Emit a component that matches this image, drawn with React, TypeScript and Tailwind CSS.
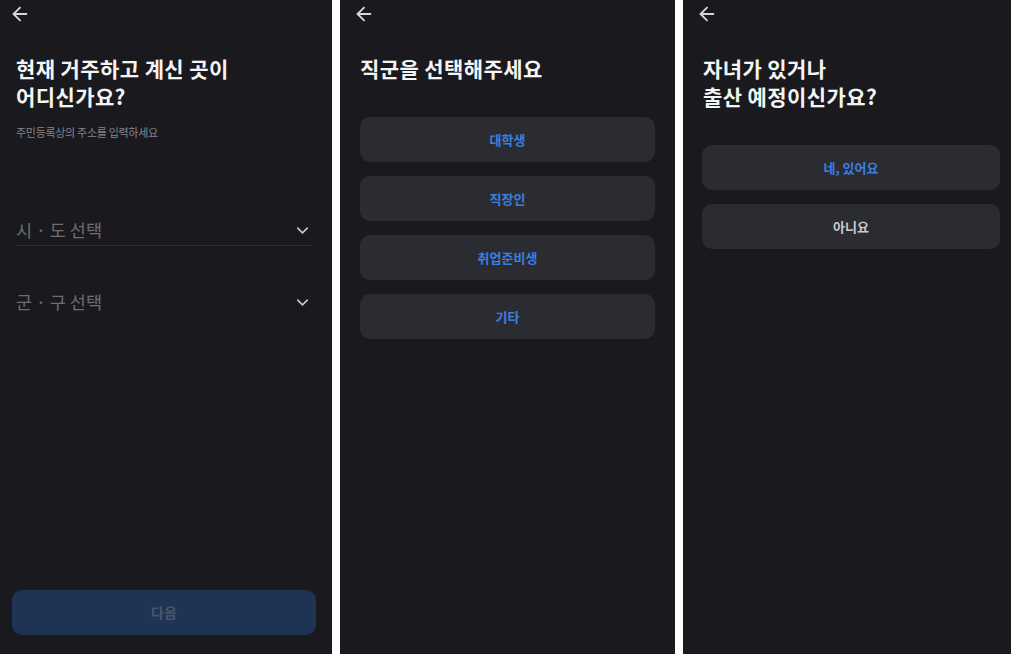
import { ArrowLeft, ChevronDown } from 'lucide-react';

const font = { fontFamily: '"Noto Sans CJK KR", "Noto Sans", sans-serif' };

function BackRow({ pad }: { pad: string }) {
  return (
    <div className={`flex h-[28px] items-center ${pad}`}>
      <ArrowLeft size={22} strokeWidth={2} className="text-[#d6d6da]" />
    </div>
  );
}

function Title({ lines, pad }: { lines: string[]; pad: string }) {
  return (
    <h1 className={`mt-[26px] text-[21px] font-bold leading-[28px] tracking-[0.4px] text-[#f4f4f5] ${pad}`}>
      {lines.map((l) => (
        <div key={l}>{l}</div>
      ))}
    </h1>
  );
}

function SelectRow({ label, underline }: { label: string; underline: boolean }) {
  return (
    <div
      className={`flex items-center justify-between pb-[3px] ${
        underline ? 'border-b border-[#2e2e33]' : ''
      }`}
    >
      <span className="text-[17.5px] leading-[24px] text-[#6d6d72]">{label}</span>
      <ChevronDown size={19} strokeWidth={2} className="mr-[1px] text-[#c8c8cc]" />
    </div>
  );
}

function Choice({ label, active = true }: { label: string; active?: boolean }) {
  return (
    <button
      className={`flex h-[45px] w-full items-center justify-center rounded-[10px] bg-[#2b2c32] text-[13px] font-bold ${
        active ? 'text-[#3b7fe0]' : 'text-[#c9c9cd]'
      }`}
    >
      {label}
    </button>
  );
}

export default function App() {
  return (
    <div className="flex h-[654px] w-[1011px] gap-[8px] overflow-hidden bg-white" style={font}>
      {/* 주소 입력 */}
      <section className="flex w-[332px] flex-col bg-[#1a1a1e]">
        <BackRow pad="pl-[9px]" />
        <Title lines={['현재 거주하고 계신 곳이', '어디신가요?']} pad="pl-[16px]" />
        <p className="mt-[15px] pl-[16px] text-[11px] leading-[14px] tracking-[-0.3px] text-[#85858b]">
          주민등록상의 주소를 입력하세요
        </p>
        <div className="mt-[79px] flex flex-col gap-[44px] pl-[16px] pr-[19px]">
          <SelectRow label="시 · 도 선택" underline />
          <SelectRow label="군 · 구 선택" underline={false} />
        </div>
        <div className="flex-1" />
        <div className="mb-[19px] px-[12px] pr-[16px]">
          <button className="flex h-[45px] w-full items-center justify-center rounded-[10px] bg-[#1f3354] text-[14px] font-bold text-[#4b5566]">
            다음
          </button>
        </div>
      </section>

      {/* 직군 선택 */}
      <section className="flex w-[335px] flex-col bg-[#1a1a1e]">
        <BackRow pad="pl-[13px]" />
        <Title lines={['직군을 선택해주세요']} pad="pl-[20px]" />
        <div className="mt-[35px] flex flex-col gap-[14px] px-[20px]">
          <Choice label="대학생" />
          <Choice label="직장인" />
          <Choice label="취업준비생" />
          <Choice label="기타" />
        </div>
      </section>

      {/* 자녀 여부 */}
      <section className="flex flex-1 flex-col bg-[#1a1a1e]">
        <BackRow pad="pl-[13px]" />
        <Title lines={['자녀가 있거나', '출산 예정이신가요?']} pad="pl-[20px]" />
        <div className="mt-[35px] flex w-[317px] flex-col gap-[14px] pl-[19px]">
          <Choice label="네, 있어요" />
          <Choice label="아니요" active={false} />
        </div>
      </section>
    </div>
  );
}
